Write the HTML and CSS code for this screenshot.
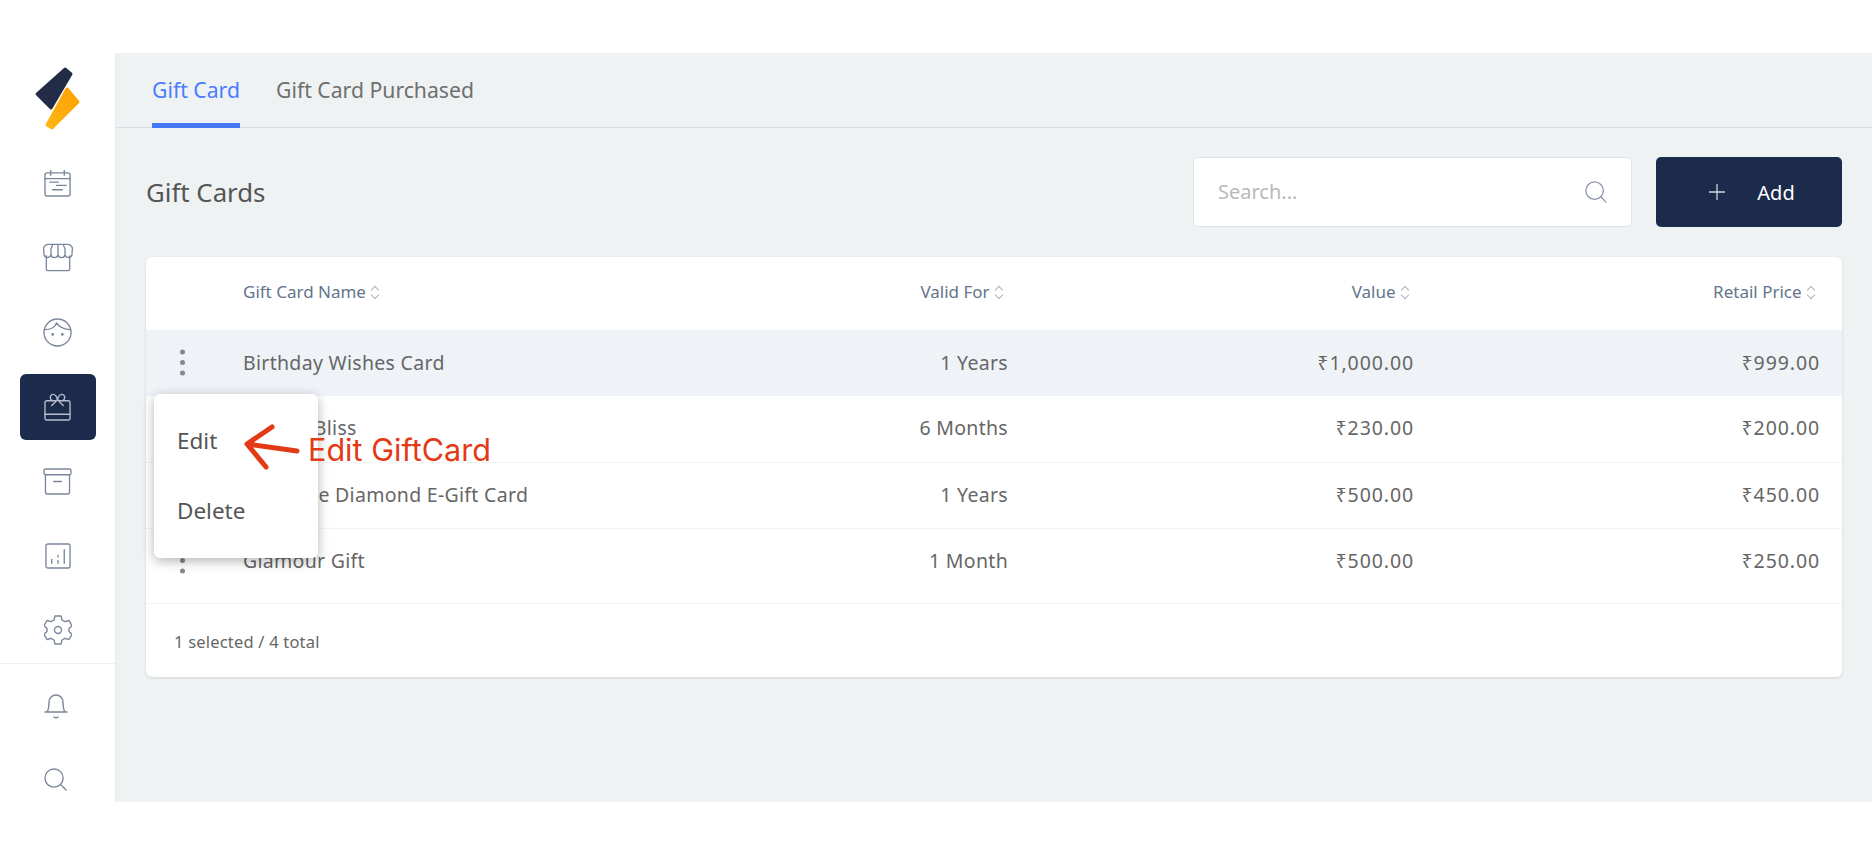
FILE: index.html
```html
<!DOCTYPE html>
<html lang="en">
<head>
    <meta charset="UTF-8">
    <title>Gift Cards</title>
    <link rel="stylesheet" href="styles.css">
</head>
<body>
    <div class="app">
        <aside class="sidebar">
            <div class="logo">
                <svg width="54" height="76" viewBox="0 0 54 76">
                    <path class="logo-dark" d="M33 4 L39 9 L19 43 L5 29 Z"/>
                    <path class="logo-amber" d="M35 24 L46 37 L20 63 L15 60 Z" fill="url(#amber)"/>
                    <defs>
                        <linearGradient id="amber" x1="1" y1="0" x2="0" y2="1">
                            <stop offset="0" stop-color="#ff9f00"/>
                            <stop offset="1" stop-color="#fcb817"/>
                        </linearGradient>
                    </defs>
                </svg>
            </div>
            <nav class="nav">
                <a class="nav-item">
                    <svg class="icon i-cal" viewBox="0 0 28 28"><rect x="1" y="3" width="26" height="24" rx="2"/><path d="M1 9h26M7 0.500v5M21 0.500v5M6 12.500h9M13 16h10M9 20.500h10"/></svg>
                </a>
                <a class="nav-item">
                    <svg class="icon i-shop" viewBox="0 0 32 30"><path d="M3.500 13v14.500a1.500 1.500 0 0 0 1.500 1.500h22a1.500 1.500 0 0 0 1.500-1.500V13"/><path d="M6 1h20a5 5 0 0 1 5 7v3a3.800 3.800 0 0 1-7.500 1 3.800 3.800 0 0 1-7.500 0 3.800 3.800 0 0 1-7.500 0A3.800 3.800 0 0 1 1 11V8a5 5 0 0 1 5-7zM8.500 12V6l2-5M16 12V1M23.500 12V6l-2-5"/></svg>
                </a>
                <a class="nav-item">
                    <svg class="icon i-face" viewBox="0 0 30 30"><circle cx="15" cy="15" r="14"/><path d="M1.500 12c6 0 11-2 12.500-7 2 4 8 7 14.500 7"/><circle class="dot" cx="10" cy="17" r="1.400"/><circle class="dot" cx="20" cy="17" r="1.400"/></svg>
                </a>
                <a class="nav-item active">
                    <svg class="icon i-gift" viewBox="0 0 28 30"><path d="M9 9H3a2 2 0 0 0-2 2v16a2 2 0 0 0 2 2h22a2 2 0 0 0 2-2V11a2 2 0 0 0-2-2h-6"/><path d="M1 23h26M14 8 8 14M14 8l6 6M14 8C10 10 6.500 9 6.500 5.500S12 0 14 8zM14 8c4 2 7.500 1 7.500-2.500S16 0 14 8z"/></svg>
                </a>
                <a class="nav-item">
                    <svg class="icon i-box" viewBox="0 0 30 28"><rect x="1" y="1" width="28" height="6" rx="1.500"/><path d="M2.500 7v18a2 2 0 0 0 2 2h21a2 2 0 0 0 2-2V7M11 14h8"/></svg>
                </a>
                <a class="nav-item">
                    <svg class="icon i-chart" viewBox="0 0 27 27"><rect x="1" y="1" width="25" height="25" rx="2"/><path d="M7 17v4M13.500 13v1.500M13.500 18v3M20 7v14"/></svg>
                </a>
                <a class="nav-item">
                    <svg class="icon i-gear" viewBox="0 0 28 30"><path d="M11 1h6l1 4 3 1.700 4-1.200 3 5.200-3 2.800v3l3 2.800-3 5.200-4-1.200-3 1.700-1 4h-6l-1-4-3-1.700-4 1.200-3-5.200 3-2.800v-3L0 10.700l3-5.200 4 1.200L10 5z"/><circle cx="14" cy="15" r="3.500"/></svg>
                </a>
            </nav>
            <div class="nav nav-bottom">
                <a class="nav-item">
                    <svg class="icon i-bell" viewBox="0 0 24 27"><path d="M1 20h22M3 20c2-3 2-5 2-10a7 7 0 0 1 14 0c0 5 0 7 2 10M10 25c1 1 3 1 4 0"/></svg>
                </a>
                <a class="nav-item">
                    <svg class="icon i-find" viewBox="0 0 24 24"><circle cx="10.500" cy="10.500" r="9.500"/><path d="m17.500 17.500 5.500 5.500"/></svg>
                </a>
            </div>
        </aside>

        <main class="content">
            <div class="tabs">
                <a class="tab tab-active">Gift Card</a>
                <a class="tab">Gift Card Purchased</a>
            </div>
            <div class="page">
                <div class="page-head">
                    <h1>Gift Cards</h1>
                    <div class="search">
                        <span>Search...</span>
                        <svg class="icon" viewBox="0 0 24 24"><circle cx="10.500" cy="10.500" r="9.500"/><path d="m17.500 17.500 5.500 5.500"/></svg>
                    </div>
                    <button class="add-btn">
                        <svg viewBox="0 0 14 14"><path d="M7 0v14M0 7h14"/></svg>
                        Add
                    </button>
                </div>

                <div class="card">
                    <table>
                        <thead>
                            <tr>
                                <th class="col-menu"></th>
                                <th class="left">Gift Card Name <i class="sort"></i></th>
                                <th class="col-valid">Valid For <i class="sort"></i></th>
                                <th class="col-value">Value <i class="sort"></i></th>
                                <th class="col-price">Retail Price <i class="sort"></i></th>
                            </tr>
                        </thead>
                        <tbody>
                            <tr class="selected">
                                <td><span class="dots"></span></td>
                                <td class="left">Birthday Wishes Card</td>
                                <td>1 Years</td>
                                <td class="num">₹1,000.00</td>
                                <td class="num">₹999.00</td>
                            </tr>
                            <tr>
                                <td><span class="dots"></span></td>
                                <td class="left">Beauty Bliss</td>
                                <td>6 Months</td>
                                <td class="num">₹230.00</td>
                                <td class="num">₹200.00</td>
                            </tr>
                            <tr>
                                <td><span class="dots"></span></td>
                                <td class="left">Sunshine Diamond E-Gift Card</td>
                                <td>1 Years</td>
                                <td class="num">₹500.00</td>
                                <td class="num">₹450.00</td>
                            </tr>
                            <tr class="last">
                                <td><span class="dots"></span></td>
                                <td class="left">Glamour Gift</td>
                                <td>1 Month</td>
                                <td class="num">₹500.00</td>
                                <td class="num">₹250.00</td>
                            </tr>
                        </tbody>
                    </table>
                    <div class="card-foot">1 selected / 4 total</div>

                    <div class="menu">
                        <a>Edit</a>
                        <a>Delete</a>
                    </div>
                    <svg class="note-arrow" width="58" height="48" viewBox="0 0 58 48"><path d="M55 29 5 22M30 5 5 22l19 23"/></svg>
                    <span class="note">Edit GiftCard</span>
                </div>
            </div>
        </main>
    </div>
</body>
</html>
```

FILE: styles.css
```css
* {
    box-sizing: border-box;
}
body {
    margin: 0;
    padding: 53px 0;
    background: #fff;
    font-family: "Noto Sans", "Open Sans", sans-serif;
    color: #666;
}
.app {
    display: flex;
    height: 749px;
}

/* sidebar */
.sidebar {
    width: 116px;
    flex: none;
    border-right: 1px solid #e9eaec;
    background: #fff;
}
.logo {
    height: 97px;
    padding: 12px 0 0 32px;
}
.logo-dark {
    fill: #232c46;
    stroke: #232c46;
    stroke-width: 3;
    stroke-linejoin: round;
}
.logo-amber {
    stroke: url(#amber);
    stroke-width: 3;
    stroke-linejoin: round;
}
.nav {
    display: flex;
    flex-direction: column;
    gap: 8.500px;
    align-items: center;
}
.nav-item {
    width: 76px;
    height: 66px;
    display: flex;
    align-items: center;
    justify-content: center;
    border-radius: 6px;
}
.nav-item.active {
    background: #1c2a4c;
}
.i-cal { width: 27px; height: 27px; }
.i-shop { width: 30px; height: 29px; }
.i-face { width: 29px; height: 29px; }
.i-gift { width: 27px; height: 29px; }
.i-box { width: 29px; height: 27px; }
.i-chart { width: 26px; height: 26px; }
.i-gear { width: 28px; height: 30px; }
.i-bell { width: 24px; height: 27px; margin-right: 4px; }
.i-find { width: 23px; height: 23px; margin-right: 4px; }
.nav-bottom {
    border-top: 1px solid #f0f0f0;
    padding-top: 8px;
}
.icon {
    fill: none;
    stroke: #7a8699;
    stroke-width: 1.400;
    stroke-linecap: round;
    stroke-linejoin: round;
}
.icon .dot {
    fill: #7a8699;
    stroke: none;
}
.active .icon {
    stroke: #b6bdcb;
}

/* main */
.content {
    flex: 1;
    background: #eff2f3;
    min-width: 0;
}
.tabs {
    display: flex;
    gap: 36px;
    height: 75px;
    padding-left: 36px;
    border-bottom: 1px solid #d8dde6;
}
.tab {
    height: 75px;
    line-height: 73px;
    font-size: 21.200px;
    color: #6f6f6f;
}
.tab-active {
    color: #4a7cff;
    border-bottom: 5px solid #4478f8;
    border-radius: 3px 3px 0 0;
}
.page {
    padding: 29px 30px 0;
}
.page-head {
    display: flex;
    align-items: center;
    height: 70px;
}
h1 {
    flex: 1;
    margin: 0;
    font-size: 25.800px;
    font-weight: 400;
    color: #555;
}
.search {
    width: 439px;
    height: 70px;
    display: flex;
    align-items: center;
    justify-content: space-between;
    padding: 0 24px;
    background: #fff;
    border: 1px solid #dfe3e8;
    border-radius: 5px;
    font-size: 20px;
    color: #b9b9b9;
}
.search span {
    margin-top: -1px;
}
.search .icon {
    width: 22px;
    height: 22px;
    stroke: #8793a8;
}
.add-btn {
    width: 186px;
    height: 70px;
    margin-left: 24px;
    display: flex;
    align-items: center;
    justify-content: center;
    gap: 32px;
    padding-left: 12px;
    background: #1c2a4c;
    color: #fff;
    border: none;
    border-radius: 5px;
    font-family: inherit;
    font-size: 20px;
}
.add-btn svg {
    width: 16px;
    height: 16px;
    fill: none;
    stroke: #d5d9e2;
    stroke-width: 1.100;
}

/* table */
.card {
    position: relative;
    margin-top: 30px;
    height: 420px;
    background: #fff;
    border-radius: 6px;
    box-shadow: 0 1px 3px rgba(0, 0, 0, 0.12);
}
table {
    width: 100%;
    border-collapse: collapse;
    table-layout: fixed;
}
th {
    height: 73px;
    padding: 0 27px 4px 0;
    text-align: right;
    font-size: 17px;
    font-weight: 400;
    color: #64748b;
}
td {
    height: 66px;
    padding: 0 22px 2px 0;
    text-align: right;
    font-size: 19.500px;
    letter-spacing: 0.300px;
    color: #666;
    border-bottom: 1px solid #f1f3f5;
}
.num {
    letter-spacing: 0.900px;
}
.col-menu {
    width: 97px;
}
.col-valid {
    width: 406px;
}
.col-value {
    width: 406px;
}
.col-price {
    width: 406px;
}
th.left,
td.left {
    text-align: left;
}
.selected td {
    background: #eff3f8;
    border-bottom: none;
}
.last td {
    height: 75px;
    padding-bottom: 11px;
}
.sort {
    display: inline-block;
    position: relative;
    width: 9px;
    height: 13px;
    vertical-align: -1px;
}
.sort::before,
.sort::after {
    content: "";
    position: absolute;
    left: 2px;
    width: 5px;
    height: 5px;
    border: solid #aab2bf;
    border-width: 1px 0 0 1px;
    transform: rotate(45deg);
}
.sort::before {
    top: 1px;
}
.sort::after {
    bottom: 1px;
    transform: rotate(225deg);
}
.dots {
    display: block;
    width: 5px;
    height: 5px;
    margin-left: 34px;
    border-radius: 50%;
    background: #85898f;
    box-shadow: 0 -10.500px 0 #85898f, 0 10.500px 0 #85898f;
}
.card-foot {
    padding: 26px 28px;
    font-size: 16.500px;
    letter-spacing: 0.200px;
    color: #666;
}

/* popup menu over the table */
.menu {
    position: absolute;
    left: 8px;
    top: 137px;
    width: 164px;
    height: 164px;
    padding: 12px 0;
    background: #fff;
    border-radius: 6px;
    box-shadow: 0 3px 12px rgba(0, 0, 0, 0.3);
}
.menu a {
    display: block;
    height: 70px;
    line-height: 70px;
    padding-left: 23px;
    font-size: 22.500px;
    color: #555;
}
.note-arrow {
    position: absolute;
    left: 96px;
    top: 165px;
    fill: none;
    stroke: #e23a16;
    stroke-width: 5;
    stroke-linecap: round;
    stroke-linejoin: round;
}
.note {
    position: absolute;
    left: 162px;
    top: 175px;
    line-height: 36px;
    color: #e23a16;
    font-family: Inter, sans-serif;
    font-size: 30.600px;
}
```
